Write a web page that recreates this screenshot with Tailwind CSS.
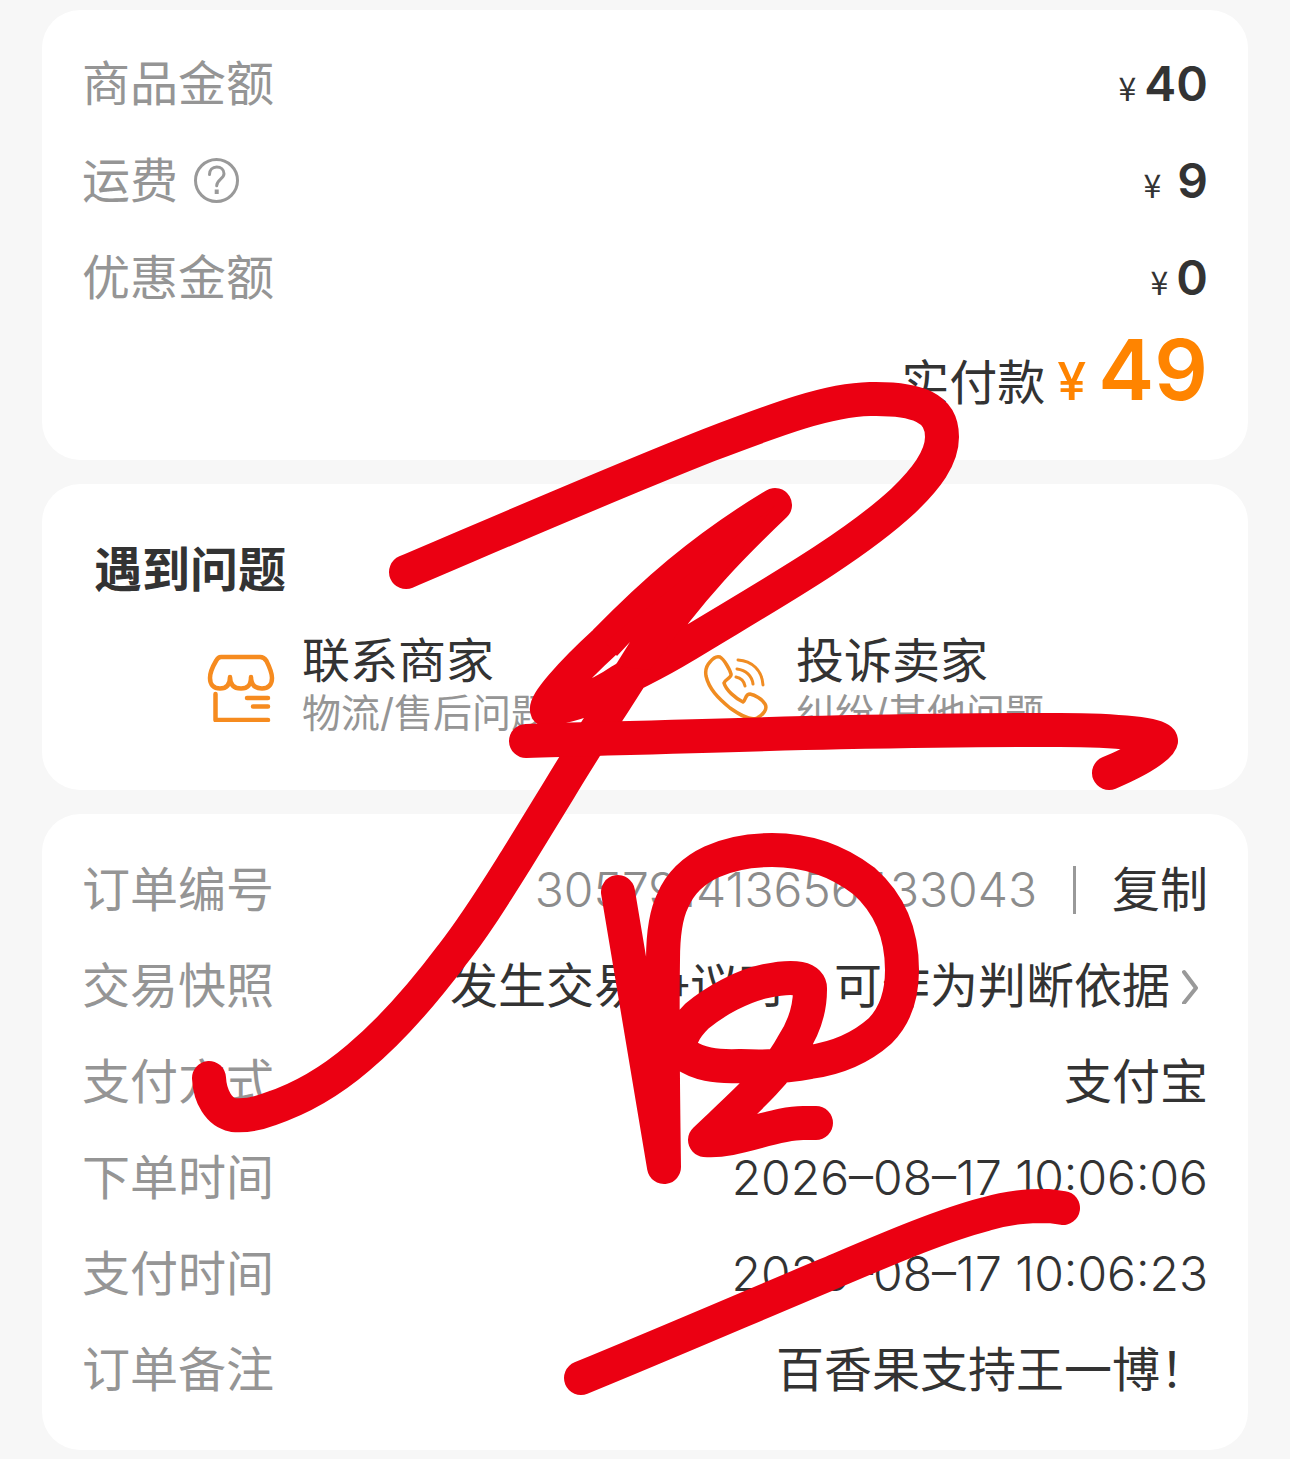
<!DOCTYPE html>
<html lang="zh-CN">
<head>
<meta charset="utf-8">
<meta name="viewport" content="width=device-width, initial-scale=1">
<title>订单详情</title>
<script src="https://cdn.jsdelivr.net/npm/@tailwindcss/browser@4"></script>
</head>
<body class="bg-[#f7f7f7]">
<main class="relative flex flex-col gap-6 px-[42px] pt-[10px] pb-[9px] font-[Inter,'Noto_Sans_CJK_SC',sans-serif] text-[48px] leading-none text-[#333]">

  <!-- Amounts -->
  <section class="rounded-[38px] bg-white px-10 pt-[25px] pb-[48px]">
    <dl>
      <div class="flex h-[97px] items-center justify-between">
        <dt class="text-[#959595]">商品金额</dt>
        <dd class="flex items-baseline gap-2 font-semibold"><span class="font-['Noto_Sans_CJK_SC',sans-serif] text-[32px] font-normal">¥</span>40</dd>
      </div>
      <div class="flex h-[97px] items-center justify-between">
        <dt class="flex items-center gap-4 text-[#959595]">运费
          <button type="button" aria-label="运费说明">
            <svg class="size-[46px]" viewBox="0 0 46 46" fill="none" stroke="#999" stroke-width="3" stroke-linecap="round"><circle cx="22.500" cy="22.500" r="21"/><path d="M15.500 16.500c0-4.500 3-7.500 7.200-7.500s7.300 2.700 7.300 6.700c0 5-7.300 6-7.300 12"/><path d="M22.700 33.500v.500" stroke-width="4" stroke-linecap="square"/></svg>
          </button>
        </dt>
        <dd class="flex items-baseline gap-4 font-semibold"><span class="font-['Noto_Sans_CJK_SC',sans-serif] text-[32px] font-normal">¥</span>9</dd>
      </div>
      <div class="flex h-[97px] items-center justify-between">
        <dt class="text-[#959595]">优惠金额</dt>
        <dd class="flex items-baseline gap-2 font-semibold"><span class="font-['Noto_Sans_CJK_SC',sans-serif] text-[32px] font-normal">¥</span>0</dd>
      </div>
      <div class="mt-[2px] flex items-baseline justify-end gap-3">
        <dt>实付款</dt>
        <dd class="flex items-baseline gap-3 text-[84px] font-semibold text-[#ff8400]"><span class="text-[52px] font-medium">¥</span>49</dd>
      </div>
    </dl>
  </section>

  <!-- Help -->
  <section class="rounded-[38px] bg-white px-[52px] pt-[62px] pb-[58px]">
    <h2 class="font-bold">遇到问题</h2>
    <div class="mt-[43px] grid grid-cols-[494px_1fr] pl-[110px]">
      <button type="button" class="flex items-center gap-6 text-left">
        <svg class="size-[74px]" viewBox="0 0 74 74" fill="none" stroke="#f68b1f" stroke-width="4.500" stroke-linecap="round" stroke-linejoin="round">
          <path d="M17 9H56Q60 9 62.500 13C65 18 68 25 68 30C68 37 64 40.500 58 40.500C51 40.500 47 37 47 29C47 37 44 40.500 37 40.500C30 40.500 26 37 26 29C26 37 22 40.500 16 40.500C10 40.500 6 37 6 30C6 25 9 18 12 13Q14 9 17 9Z"/>
          <path d="M11.500 46V72H64M43 50H64M49 58.500H64"/>
        </svg>
        <span class="flex flex-col gap-2"><span>联系商家</span><span class="text-[39px] text-[#959595]">物流/售后问题</span></span>
      </button>
      <button type="button" class="flex items-center gap-6 text-left">
        <svg class="size-[74px]" viewBox="0 0 74 74" fill="none" stroke="#f08c22" stroke-width="3.500" stroke-linecap="round" stroke-linejoin="round">
          <path d="M12 14C15 10 19 8 22 9C26 11 32 22 33 26C34 30 27 31 26 35C28 42 37 50 45 54C48 52 47 46 52 46C57 47 64 51 67 56C70 61 65 67 59 70C52 73 42 67 32 60C20 50 11 41 8 28C7 22 8 18 12 14Z"/>
          <path d="M40 12C54 13 64 22 65 37M39 21C48 22 54 28 55 36M38 29C43 30 46 33 47 38" stroke-width="3"/>
        </svg>
        <span class="flex flex-col gap-2"><span>投诉卖家</span><span class="text-[39px] text-[#959595]">纠纷/其他问题</span></span>
      </button>
    </div>
  </section>

  <!-- Order details -->
  <section class="rounded-[38px] bg-white px-10 pt-7 pb-8">
    <dl>
      <div class="flex h-24 items-center justify-between">
        <dt class="text-[#959595]">订单编号</dt>
        <dd class="flex items-center gap-9"><span class="font-light text-[#8c8c8c]">305791413656433043</span><span class="h-12 w-[3px] bg-[#999]"></span><button type="button">复制</button></dd>
      </div>
      <div class="flex h-24 items-center justify-between">
        <dt class="text-[#959595]">交易快照</dt>
        <dd><a href="#" class="flex items-center gap-3 pr-2">发生交易争议时，可作为判断依据<svg class="h-9 w-[18px]" viewBox="0 0 18 36" fill="none" stroke="#999" stroke-width="4" stroke-linecap="round" stroke-linejoin="round"><path d="M2 4L14 20L2 35"/></svg></a></dd>
      </div>
      <div class="flex h-24 items-center justify-between">
        <dt class="text-[#959595]">支付方式</dt>
        <dd>支付宝</dd>
      </div>
      <div class="flex h-24 items-center justify-between">
        <dt class="text-[#959595]">下单时间</dt>
        <dd class="font-light">2026–08–17 10:06:06</dd>
      </div>
      <div class="flex h-24 items-center justify-between">
        <dt class="text-[#959595]">支付时间</dt>
        <dd class="font-light">2026–08–17 10:06:23</dd>
      </div>
      <div class="flex h-24 items-center justify-between">
        <dt class="text-[#959595]">订单备注</dt>
        <dd>百香果支持王一博！</dd>
      </div>
    </dl>
  </section>

  <!-- Handwritten red marks -->
  <svg class="pointer-events-none absolute inset-x-0 top-0 w-full" viewBox="0 0 1290 1459" fill="none" stroke="#eb0012" stroke-width="34" stroke-linecap="round" stroke-linejoin="round" aria-hidden="true">
    <path d="M406 572C507 529 608 485 709 445C780 418 828 400 870 399C918 398 942 408 942 437C942 458 927 478 903 501C850 550 765 597 683 647C655 664 640 670 622 680C590 702 565 706 547 710C544 704 570 674 605 642C650 596 700 550 775 505C735 543 690 588 644 655C615 702 587 743 559 790L516 860C494 895 475 926 452 955C425 991 395 1027 358 1058C330 1082 300 1099 270 1109C254 1115 242 1116 233 1115C219 1112 210 1097 209 1078"/>
    <path d="M775 505L605 642L617 656L630 642L615 666L650 670Z" fill="#eb0012" stroke="none"/>
    <path d="M526 741C700 736 900 729 1060 730C1120 730 1160 735 1161 741C1160 748 1135 762 1109 773"/>
    <path d="M618 892L664 1167C663 1090 662 1030 663 960C663 932 666 914 673 900C688 865 728 850 772 850C806 850 838 861 864 881C890 904 902 935 902 970C902 995 896 1015 880 1031C862 1047 838 1058 810 1062C785 1067 762 1067 740 1066C715 1067 698 1064 684 1054C675 1044 684 1029 697 1016C715 1001 742 986 766 981C795 975 811 978 810 990C810 1008 804 1028 792 1046C777 1074 745 1102 705 1140C735 1143 775 1122 805 1123L816 1123"/>
    <path d="M581 1378C664 1344 745 1309 826 1275C885 1250 940 1226 986 1214C1010 1207 1027 1206 1049 1206L1063 1208"/>
  </svg>
</main>
</body>
</html>
